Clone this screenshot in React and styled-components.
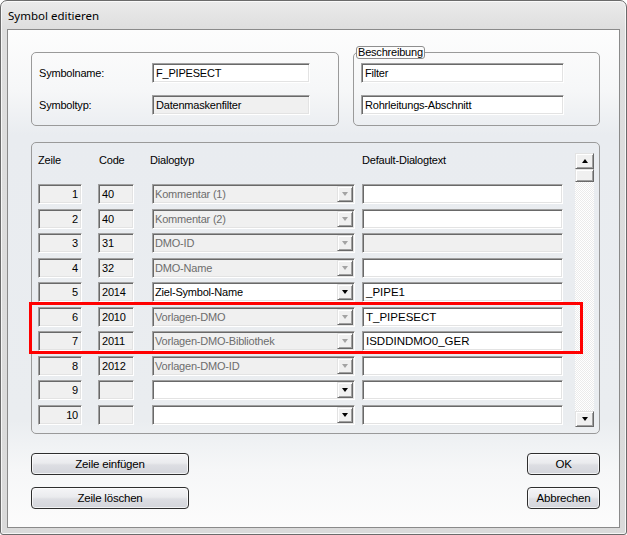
import React from "react";
import styled, { createGlobalStyle, css } from "styled-components";

const GlobalStyle = createGlobalStyle`
  html, body {
    margin: 0;
    padding: 0;
    background: #ffffff;
  }
  body {
    font-family: "Liberation Sans", Arial, sans-serif;
    font-size: 11px;
    letter-spacing: -0.2px;
    color: #000;
  }
`;

const sunken = css`
  box-sizing: border-box;
  border-style: solid;
  border-width: 1px;
  border-color: #a0a0a0 #ffffff #ffffff #a0a0a0;
  box-shadow: inset 1px 1px 0 #696969, inset -1px -1px 0 #e3e3e3;
`;

const raised = css`
  box-sizing: border-box;
  border-style: solid;
  border-width: 1px;
  border-color: #e3e3e3 #696969 #696969 #e3e3e3;
  box-shadow: inset 1px 1px 0 #ffffff, inset -1px -1px 0 #a0a0a0;
  background: #f0f0f0;
`;

const Window = styled.div`
  width: 627px;
  height: 535px;
  box-sizing: border-box;
  border: 1px solid #6b6b6b;
  border-radius: 7px 7px 3px 3px;
  box-shadow: inset 0 0 0 1px rgba(255, 255, 255, 0.75);
  background: linear-gradient(to bottom, #ebebeb 0, #dedede 28px, #dadada 100%);
  padding: 0 6px 6px;
  display: flex;
  flex-direction: column;
`;

const TitleBar = styled.div`
  height: 28px;
  display: flex;
  align-items: center;
  padding-left: 1px;
  font-family: "Noto Sans", "Open Sans", sans-serif;
  font-size: 11.5px;
  letter-spacing: 0;
  color: #000;
`;

const Client = styled.div`
  flex: 1;
  position: relative;
  border: 1px solid #8a8a8a;
  background: linear-gradient(
    to bottom,
    #fdfdfd 0,
    #f6f7f8 60px,
    #e9ecf0 105px,
    #eaedf0 390px,
    #f6f7f8 440px,
    #fcfcfc 100%
  );
  padding: 22px 19px 0 23px;
  display: flex;
  flex-direction: column;
`;

const TopRow = styled.div`
  display: flex;
  gap: 14px;
`;

const Group = styled.div`
  position: relative;
  box-sizing: border-box;
  width: ${(p) => p.$w}px;
  height: ${(p) => p.$h}px;
  border: 1px solid #9a9a9a;
  border-radius: 5px;
  padding: ${(p) => p.$pad};
`;

const Legend = styled.div`
  position: absolute;
  top: -7px;
  left: 2px;
  padding: 0 1px;
  line-height: 11px;
  border: 1px solid #8e8e8e;
  border-radius: 3px;
  background: #fcfcfc;
`;

const FieldGrid = styled.div`
  display: grid;
  grid-template-columns: ${(p) => p.$cols};
  grid-auto-rows: 20px;
  row-gap: 12px;
  align-items: center;
`;

const Label = styled.span`
  white-space: nowrap;
`;

const Field = styled.div`
  ${sunken};
  height: 20px;
  width: ${(p) => (p.$w ? `${p.$w}px` : "100%")};
  background: ${(p) => (p.$disabled ? "#f0f0f0" : "#ffffff")};
  padding: 0 3px;
  display: flex;
  align-items: center;
  justify-content: ${(p) => (p.$right ? "flex-end" : "flex-start")};
  white-space: nowrap;
  overflow: hidden;
  line-height: 14px;
`;

const TableGroup = styled(Group)`
  margin-top: 16px;
  display: flex;
  justify-content: space-between;
`;

const Table = styled.div`
  width: 525px;
  display: flex;
  flex-direction: column;
`;

const cols = css`
  display: grid;
  grid-template-columns: 60px 54px 210px 201px;
`;

const Header = styled.div`
  ${cols};
  height: 31px;
  line-height: 14px;
`;

const HeadCell = styled.span`
  margin-left: ${(p) => p.$off || 0}px;
  white-space: nowrap;
`;

const Rows = styled.div`
  display: flex;
  flex-direction: column;
  gap: 4.5px;
`;

const Row = styled.div`
  ${cols};
  height: 20px;
`;

const Combo = styled.div`
  ${sunken};
  width: 203px;
  height: 20px;
  display: flex;
  align-items: center;
  background: ${(p) => (p.$disabled ? "#f0f0f0" : "#ffffff")};
  color: ${(p) => (p.$disabled ? "#6d6d6d" : "#000000")};
  line-height: 14px;
`;

const ComboText = styled.span`
  flex: 1;
  padding-left: 2px;
  white-space: nowrap;
  overflow: hidden;
`;

const DropBtn = styled.div`
  ${raised};
  width: 16px;
  height: 16px;
  margin-right: 1px;
  display: flex;
  align-items: center;
  justify-content: center;
`;

const Arrow = styled.div`
  width: 0;
  height: 0;
  border-left: 3.5px solid transparent;
  border-right: 3.5px solid transparent;
  ${(p) =>
    p.$up
      ? css`border-bottom: 4px solid ${p.$color};`
      : css`border-top: 4px solid ${p.$color};`}
`;

const DefaultText = styled(Field)`
  font-size: 11.5px;
  letter-spacing: 0;
`;

const Scrollbar = styled.div`
  width: 19px;
  display: flex;
  flex-direction: column;
`;

const ScrollBtn = styled.div`
  ${raised};
  height: ${(p) => p.$h}px;
  display: flex;
  align-items: center;
  justify-content: center;
`;

const Track = styled.div`
  flex: 1;
  background-color: #ffffff;
  background-image: conic-gradient(#ebebeb 25%, #ffffff 0 50%, #ebebeb 0 75%, #ffffff 0);
  background-size: 2px 2px;
`;

const ButtonRow = styled.div`
  margin-top: 19px;
  display: flex;
  justify-content: space-between;
`;

const ButtonCol = styled.div`
  display: flex;
  flex-direction: column;
  gap: 12px;
`;

const Button = styled.button`
  box-sizing: border-box;
  width: ${(p) => p.$w}px;
  height: 22px;
  padding: 0;
  border: 1px solid #2e2e2e;
  border-radius: 4px;
  box-shadow: inset 0 0 0 1px rgba(255, 255, 255, 0.7);
  background: linear-gradient(to bottom, #f5f5f7 0%, #eaebee 45%, #dddee3 55%, #d3d5db 100%);
  font-family: inherit;
  font-size: 11.5px;
  letter-spacing: -0.2px;
  color: #000;
`;

const Highlight = styled.div`
  position: absolute;
  left: 21px;
  top: 272px;
  width: 554px;
  height: 52px;
  box-sizing: border-box;
  border: 3px solid #ff0000;
  pointer-events: none;
`;

const rows = [
  { nr: 1, code: "40", typ: "Kommentar (1)", dis: true, text: "" },
  { nr: 2, code: "40", typ: "Kommentar (2)", dis: true, text: "" },
  { nr: 3, code: "31", typ: "DMO-ID", dis: true, text: "", textDis: true },
  { nr: 4, code: "32", typ: "DMO-Name", dis: true, text: "" },
  { nr: 5, code: "2014", typ: "Ziel-Symbol-Name", dis: false, text: "_PIPE1" },
  { nr: 6, code: "2010", typ: "Vorlagen-DMO", dis: true, text: "T_PIPESECT" },
  { nr: 7, code: "2011", typ: "Vorlagen-DMO-Bibliothek", dis: true, text: "ISDDINDMO0_GER" },
  { nr: 8, code: "2012", typ: "Vorlagen-DMO-ID", dis: true, text: "" },
  { nr: 9, code: "", typ: "", dis: false, text: "" },
  { nr: 10, code: "", typ: "", dis: false, text: "" },
];

const App = () => {
  return (
    <>
      <GlobalStyle />
      <Window>
        <TitleBar>Symbol editieren</TitleBar>
        <Client>
          <TopRow>
            <Group $w={308} $h={74} $pad="10px 0 0 7px">
              <FieldGrid $cols="113px 158px">
                <Label>Symbolname:</Label>
                <Field>F_PIPESECT</Field>
                <Label>Symboltyp:</Label>
                <Field $disabled>Datenmaskenfilter</Field>
              </FieldGrid>
            </Group>
            <Group $w={247} $h={74} $pad="10px 0 0 7px">
              <Legend>Beschreibung</Legend>
              <FieldGrid $cols="203px">
                <Field>Filter</Field>
                <Field>Rohrleitungs-Abschnitt</Field>
              </FieldGrid>
            </Group>
          </TopRow>

          <TableGroup $w={569} $h={292} $pad="10px 5px 6px 6px">
            <Table>
              <Header>
                <HeadCell>Zeile</HeadCell>
                <HeadCell $off={1}>Code</HeadCell>
                <HeadCell $off={-2}>Dialogtyp</HeadCell>
                <HeadCell>Default-Dialogtext</HeadCell>
              </Header>
              <Rows>
                {rows.map((r) => (
                  <Row key={r.nr}>
                    <Field $w={44} $disabled $right>
                      {r.nr}
                    </Field>
                    <Field $w={36} $disabled>
                      {r.code}
                    </Field>
                    <Combo $disabled={r.dis}>
                      <ComboText>{r.typ}</ComboText>
                      <DropBtn>
                        <Arrow $color={r.dis ? "#a3a3a3" : "#000000"} />
                      </DropBtn>
                    </Combo>
                    <DefaultText $disabled={r.textDis}>{r.text}</DefaultText>
                  </Row>
                ))}
              </Rows>
            </Table>
            <Scrollbar>
              <ScrollBtn $h={16}>
                <Arrow $up $color="#000000" />
              </ScrollBtn>
              <ScrollBtn $h={13} />
              <Track />
              <ScrollBtn $h={16}>
                <Arrow $color="#000000" />
              </ScrollBtn>
            </Scrollbar>
          </TableGroup>

          <ButtonRow>
            <ButtonCol>
              <Button $w={158}>Zeile einfügen</Button>
              <Button $w={158}>Zeile löschen</Button>
            </ButtonCol>
            <ButtonCol>
              <Button $w={73}>OK</Button>
              <Button $w={73}>Abbrechen</Button>
            </ButtonCol>
          </ButtonRow>

          <Highlight />
        </Client>
      </Window>
    </>
  );
};

export default App;
